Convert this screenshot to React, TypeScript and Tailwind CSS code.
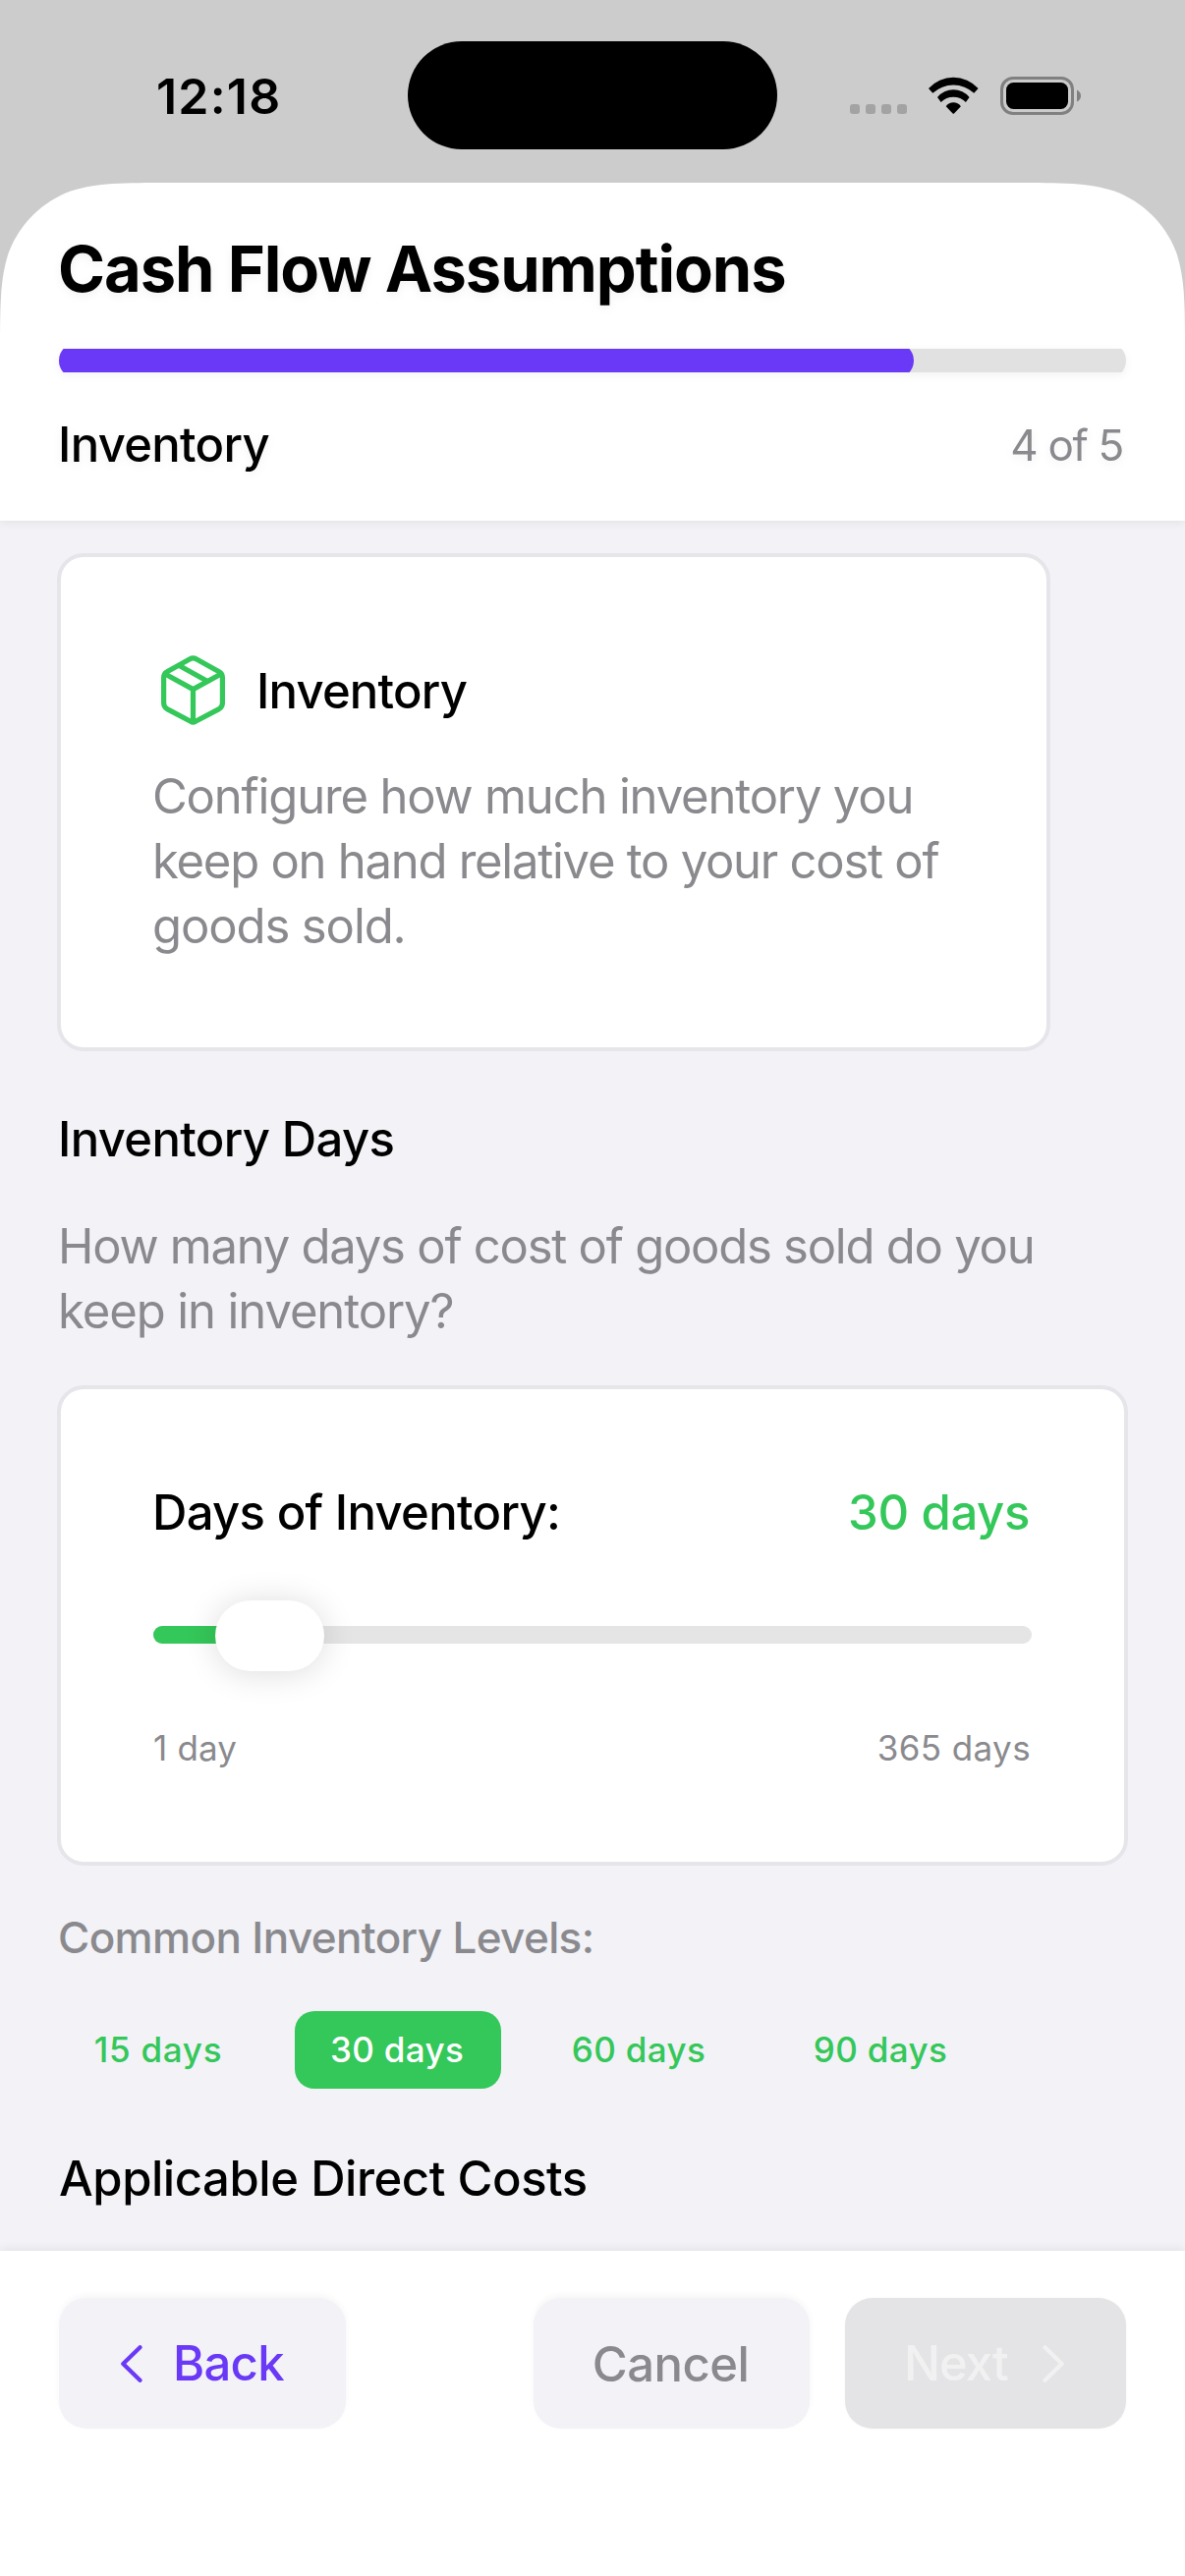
function StatusBar() {
  return (
    <div className="flex h-[186px] items-start bg-[#cccccc]">
      <div className="w-[415px] pl-[159px] pt-[66px] text-[50px] leading-[64px] font-semibold tracking-[1.2px]">12:18</div>
      <div className="mt-[42px] h-[110px] w-[376px] rounded-full bg-black" />
      <div className="ml-[74px] mt-[106px] flex gap-[6px]">
        <i className="size-[10px] rounded-[3px] bg-[#a3a3a3]" />
        <i className="size-[10px] rounded-[3px] bg-[#a3a3a3]" />
        <i className="size-[10px] rounded-[3px] bg-[#a3a3a3]" />
        <i className="size-[10px] rounded-[3px] bg-[#a3a3a3]" />
      </div>
      <svg className="ml-[22px] mt-[78px]" width="51" height="39" viewBox="0 -0.7 51 39">
        <path d="M0 11.3A34 34 0 0 1 50.6 11.3L46.3 16A31 31 0 0 0 4.3 16Z" />
        <path d="M9 20.3A21 21 0 0 1 41.6 20.3L37.9 25.3A17.6 17.6 0 0 0 12.7 25.3Z" />
        <path d="M17.7 29.6A9.2 9.2 0 0 1 32.9 29.6L26 36.7Q25.3 37.4 24.6 36.7Z" />
      </svg>
      <svg className="ml-[22px] mt-[78px]" width="83" height="39" viewBox="0 0 83 39">
        <rect x="1.5" y="1.5" width="72" height="36" rx="11.5" fill="none" stroke="#808080" strokeWidth="3" />
        <rect x="6" y="6" width="63" height="27" rx="7.5" />
        <path d="M78 13.5Q82 15.5 82 19.5T78 25.5Z" fill="#808080" />
      </svg>
    </div>
  );
}

function BoxIcon() {
  return (
    <svg className="ml-[9px]" width="65" height="71" viewBox="0 0 65 71" fill="none" stroke="#34c759" strokeWidth="5.2" strokeLinejoin="round" strokeLinecap="round">
      <path d="M28.9 3.9Q32.5 1.9 36.1 3.9L59 16.8Q62.4 18.8 62.4 22.6V48.6Q62.4 52.6 59 54.6L35 67.2Q32.5 68.8 30 67.2L6 54.6Q2.6 52.6 2.6 48.6V22.6Q2.6 18.8 6 16.8Z" />
      <path d="M4 19L32.5 34.6L61 19M32.5 34.6V67" />
      <path d="M18.5 10.5L46.8 26.2" />
    </svg>
  );
}

function Header() {
  return (
    <header className="relative z-10 bg-white pb-[47px] pt-12 shadow-[0_2px_9px_rgba(0,0,0,0.07)]">
      <div className="px-[60px] drop-shadow-[0_3px_4px_rgba(0,0,0,0.05)]">
        <h1 className="-ml-[1px] text-[65px] leading-[79px] font-bold tracking-[-1.07px]">Cash Flow Assumptions</h1>
        <div className="mt-[42px] h-6 overflow-hidden">
          <div className="-mt-[6px] h-9 w-full rounded-full bg-[#e1e1e2]">
            <div className="h-9 w-[870px] rounded-full bg-[#6a38f7]" />
          </div>
        </div>
        <div className="mt-11 flex justify-between leading-[60px]">
          <span className="-ml-[1px] text-[49px] font-medium tracking-[-0.7px]">Inventory</span>
          <span className="mr-[3px] text-[44px] tracking-[-1.3px] text-[#8a8a8e]">4 of 5</span>
        </div>
      </div>
    </header>
  );
}

function IntroCard() {
  return (
    <section className="-ml-[2px] h-[507px] w-[1011px] rounded-[27px] border-4 border-[#e5e5ea] bg-white pl-[93px] pt-[100px]">
      <div className="flex h-[71px] items-center gap-8">
        <BoxIcon />
        <span className="pt-[2px] text-[49px] leading-[66px] font-medium tracking-[-0.8px]">Inventory</span>
      </div>
      <p className="mt-10 text-[49px] leading-[66px] text-[#8a8a8e]">
        <span className="tracking-[-1.17px]">Configure how much inventory you</span>
        <br />
        <span className="tracking-[-1.26px]">keep on hand relative to your cost of</span>
        <br />
        <span className="tracking-[-1.1px]">goods sold.</span>
      </p>
    </section>
  );
}

function SliderCard() {
  return (
    <section className="-mx-[2px] mt-[42px] h-[489px] rounded-[27px] border-4 border-[#e5e5ea] bg-white px-[94px] pt-[93px]">
      <div className="flex justify-between text-[49px] leading-[66px] font-medium">
        <span className="-ml-[1px] tracking-[-0.68px]">Days of Inventory:</span>
        <span className="mr-[2px] tracking-[-0.35px] text-[#34c759]">30 days</span>
      </div>
      <div className="relative mt-14 flex h-[72px] items-center">
        <div className="-mt-[3px] h-[18px] w-full overflow-hidden rounded-full bg-[#e5e5e5]">
          <div className="h-full w-[100px] bg-[#34c759]" />
        </div>
        <div className="absolute left-[63px] top-0 h-[72px] w-[111px] rounded-[36px] bg-white shadow-[0_2px_34px_rgba(0,0,0,0.14)]" />
      </div>
      <div className="mt-14 flex justify-between text-[35px] leading-[44px] text-[#8a8a8e]">
        <span className="tracking-[0.15px]">1 day</span>
        <span className="mr-[1px] tracking-[0.4px]">365 days</span>
      </div>
    </section>
  );
}

function Levels() {
  return (
    <div className="mt-[45px] flex h-[79px] gap-9 text-center text-[35px] leading-[79px] font-medium tracking-[0.34px] text-[#34c759]">
      <span className="w-[204px] pr-[2px] tracking-[0.74px]">15 days</span>
      <span className="w-[210px] rounded-[20px] bg-[#34c759] pr-[2px] text-white">30 days</span>
      <span className="w-[210px] pr-[2px]">60 days</span>
      <span className="w-[210px] pr-[2px]">90 days</span>
    </div>
  );
}

function Footer() {
  return (
    <footer className="relative z-10 flex h-[331px] bg-white px-[60px] pt-12 text-[49px] leading-[135px] font-medium shadow-[0_-2px_9px_rgba(0,0,0,0.07)]">
      <div className="flex h-[133px] w-[292px] items-center gap-[31px] rounded-[28px] bg-[#f2f2f7] pl-[63px] text-[#6a38f7] shadow-[0_-3px_6px_rgba(0,0,0,0.04)]">
        <svg width="22" height="38" viewBox="0 0 22 38" fill="none" stroke="currentColor" strokeWidth="4.2" strokeLinecap="round" strokeLinejoin="round">
          <path d="M19.5 2.2L2.3 19L19.5 35.8" />
        </svg>
        <span className="tracking-[-0.7px]">Back</span>
      </div>
      <div className="ml-auto h-[133px] w-[281px] rounded-[28px] bg-[#f2f2f7] pr-[2px] text-center tracking-[-0.52px] text-[#8a8a8e] shadow-[0_-3px_6px_rgba(0,0,0,0.04)]">
        Cancel
      </div>
      <div className="ml-9 flex h-[133px] w-[286px] items-center gap-[35px] rounded-[28px] bg-[#e4e4e6] pl-[60px] text-[#f1f1f2] shadow-[0_0_3px_rgba(0,0,0,0.04)]">
        <span className="tracking-[-0.98px]">Next</span>
        <svg width="22" height="38" viewBox="0 0 22 38" fill="none" stroke="currentColor" strokeWidth="4.2" strokeLinecap="round" strokeLinejoin="round">
          <path d="M2.5 2.2L19.7 19L2.5 35.8" />
        </svg>
      </div>
    </footer>
  );
}

export default function App() {
  return (
    <div className="h-[2622px] w-[1206px] overflow-hidden bg-[#cccccc] font-['Inter',sans-serif] text-black">
      <StatusBar />
      <div className="[clip-path:path('M0_174C0_124_0_99_8.5_72C19.3_42.5_42.5_19.3_72_8.5C99_0_124_0_174_0H1032C1082_0_1107_0_1134_8.5C1163.5_19.3_1186.7_42.5_1197.5_72C1206_99_1206_124_1206_174V2436H0Z')]">
        <Header />
        <main className="h-[1761px] bg-[#f2f2f7] px-[60px] pt-[33px]">
          <IntroCard />
          <h2 className="-ml-[1px] mt-[57px] text-[49px] leading-[66px] font-medium tracking-[-0.65px]">Inventory Days</h2>
          <p className="-ml-[1px] mt-[43px] text-[49px] leading-[66px] tracking-[-1.25px] text-[#8a8a8e]">
            How many days of cost of goods sold do you
            <br />
            <span className="tracking-[-1.1px]">keep in inventory?</span>
          </p>
          <SliderCard />
          <h3 className="-ml-[1px] mt-[43px] text-[44px] leading-[60px] font-medium tracking-[-0.63px] text-[#8a8a8e]">Common Inventory Levels:</h3>
          <Levels />
          <h2 className="mt-[59px] text-[49px] leading-[66px] font-medium tracking-[-0.45px]">Applicable Direct Costs</h2>
        </main>
        <Footer />
      </div>
    </div>
  );
}
